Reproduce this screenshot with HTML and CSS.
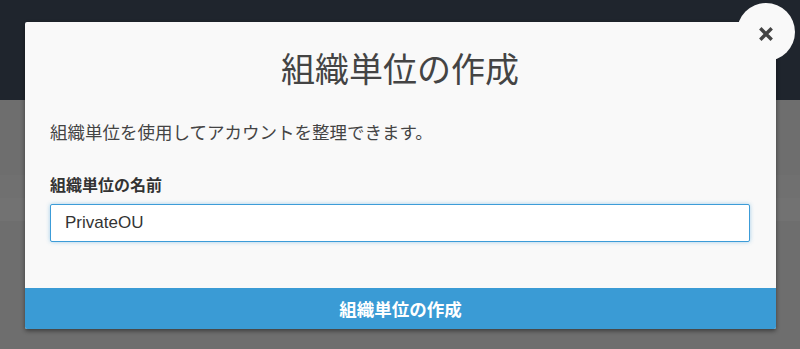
FILE: index.html
```html
<!DOCTYPE html>
<html lang="ja">
<head>
    <meta charset="UTF-8">
    <meta name="viewport" content="width=device-width, initial-scale=1.0">
    <title>組織単位の作成</title>
    <link rel="stylesheet" href="styles.css">
</head>
<body>
    <!-- Page behind the overlay -->
    <div class="top-bar"></div>
    <div class="page-body">
        <div class="page-row"></div>
        <div class="page-row"></div>
    </div>

    <!-- Modal -->
    <div class="modal">
        <button class="close-button" aria-label="閉じる">
            <svg width="14" height="14" viewBox="0 0 14 14">
                <path d="M2.5 2.5 L11.5 11.5 M11.5 2.5 L2.5 11.5" stroke="#444" stroke-width="3.4" stroke-linecap="square"/>
            </svg>
        </button>
        <div class="modal-content">
            <h1 class="modal-title">組織単位の作成</h1>
            <p class="modal-text">組織単位を使用してアカウントを整理できます。</p>
            <label class="field-label" for="ou-name">組織単位の名前</label>
            <input class="field-input" type="text" id="ou-name" value="PrivateOU">
        </div>
        <button class="submit-button">組織単位の作成</button>
    </div>
</body>
</html>
```

FILE: styles.css
```css
body {
    margin: 0;
    height: 349px;
    overflow: hidden;
    background-color: #6e6e6e;
    font-family: 'Helvetica Neue', 'Liberation Sans', 'Noto Sans CJK JP', sans-serif;
    position: relative;
}
.top-bar {
    height: 100px;
    background-color: #1f252d;
}
.page-body {
    padding-top: 75px;
}
.page-row {
    height: 23px;
    background-color: #707070;
}
.page-row + .page-row {
    background-color: #727272;
}

/* Modal dialog */
.modal {
    position: absolute;
    top: 22px;
    left: 25px;
    width: 751px;
    height: 307px;
    background-color: #f9f9f9;
    border-radius: 2px;
    box-shadow: 0 2px 4px rgba(0, 0, 0, 0.45);
    display: flex;
    flex-direction: column;
}
.modal-content {
    flex: 1;
    display: flex;
    flex-direction: column;
    padding: 28px 26px 0 25px;
}
.modal-title {
    margin: 0;
    font-size: 34px;
    line-height: 40px;
    font-weight: normal;
    text-align: center;
    color: #444;
}
.modal-text {
    margin: 31px 0 0 0;
    font-size: 17.5px;
    line-height: 24px;
    color: #444;
}
.field-label {
    margin-top: 31px;
    font-size: 16px;
    line-height: 20px;
    font-weight: bold;
    color: #333;
}
.field-input {
    margin-top: 8px;
    height: 38px;
    box-sizing: border-box;
    width: 700px;
    padding: 0 14px;
    border: 1px solid #3c9cd8;
    border-radius: 2px;
    background-color: #fff;
    box-shadow: 0 0 4px rgba(60, 156, 216, 0.45);
    font-family: 'Helvetica Neue', 'Liberation Sans', 'Noto Sans CJK JP', sans-serif;
    font-size: 17px;
    color: #333;
    outline: none;
}
.submit-button {
    height: 41px;
    border: none;
    border-radius: 0 0 2px 2px;
    background-color: #3a9bd5;
    color: #fff;
    font-family: 'Helvetica Neue', 'Liberation Sans', 'Noto Sans CJK JP', sans-serif;
    font-size: 17.5px;
    font-weight: bold;
    cursor: pointer;
}
.close-button {
    position: absolute;
    top: -19px;
    right: -19px;
    width: 58px;
    height: 58px;
    border: none;
    border-radius: 50%;
    background-color: #f9f9f9;
    padding: 4px 0 0 0;
    display: flex;
    align-items: center;
    justify-content: center;
    cursor: pointer;
}
```
